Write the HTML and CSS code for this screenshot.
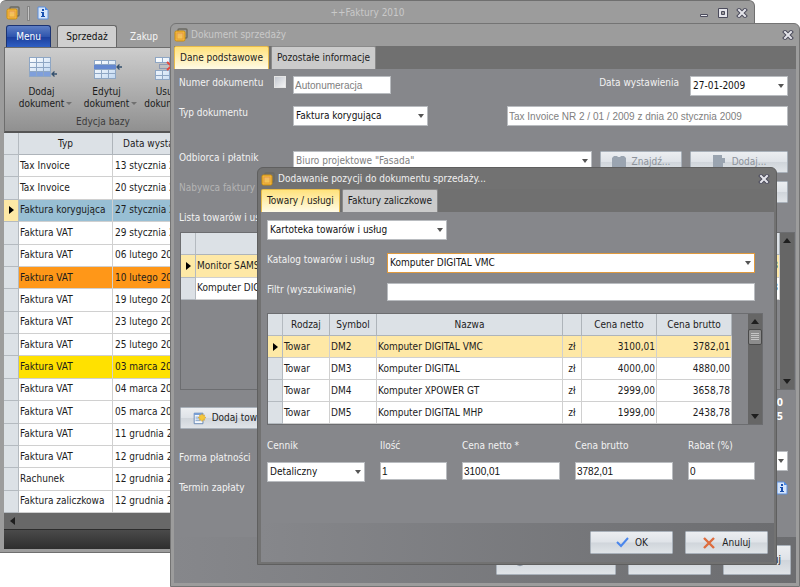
FILE: index.html
```
<!DOCTYPE html>
<html lang="pl">
<head>
  <meta charset="UTF-8">
  <meta name="viewport" content="width=device-width, initial-scale=1.0">
  <title>++Faktury 2010</title>
  <link rel="stylesheet" href="styles.css">
</head>
<body>
  <svg class="defs" aria-hidden="true">
    <linearGradient id="gold" x1="0" y1="0" x2="0" y2="1">
      <stop offset="0" stop-color="#f0b56c"/><stop offset="1" stop-color="#f6cb4c"/>
    </linearGradient>
    <linearGradient id="cell" x1="0" y1="0" x2="1" y2="1">
      <stop offset="0" stop-color="#ffffff"/><stop offset="1" stop-color="#c3d9f2"/>
    </linearGradient>
    <symbol id="app" viewBox="0 0 14 14">
      <rect x="4" y="1" width="9" height="9" rx="1" fill="none" stroke="#6b6a62" stroke-width="1.4"/>
      <rect x="1" y="3" width="10" height="10" rx="1.5" fill="#f3bd3c" stroke="#c98a10" stroke-width="1"/>
      <rect x="3" y="5" width="6" height="6" fill="url(#gold)" stroke="#e59a3c" stroke-width="1"/>
    </symbol>
    <symbol id="info" viewBox="0 0 12 14">
      <path d="M1 1h7l3 3v9H1z" fill="#d5e5fb" stroke="#5c8fdc"/>
      <path d="M8 1v3h3z" fill="#4f8ae0"/>
      <path d="M5 3h2v2H5zM4 6h3v4h1v1H4v-1h1V7H4z" fill="#174fb0"/>
    </symbol>
    <symbol id="close" viewBox="0 0 12 10">
      <path d="M3 2l6 6M9 2L3 8" stroke="#4c4c5c" stroke-width="4" stroke-linecap="square"/>
      <path d="M3 2l6 6M9 2L3 8" stroke="#e4e4ea" stroke-width="2" stroke-linecap="square"/>
    </symbol>
    <symbol id="grid" viewBox="0 0 22 20">
      <path d="M0 0h22v20H0z" fill="#8ea6c4"/>
      <path d="M1 1h6v4H1zM8 1h6v4H8zM15 1h6v4h-6zM1 6h6v4H1zM8 6h6v4H8zM15 6h6v4h-6zM1 11h6v3H1zM8 11h6v3H8zM15 11h6v3h-6z" fill="url(#cell)"/>
      <path d="M1 15h6v4H1zM8 15h6v4H8zM15 15h6v4h-6z" fill="#7f9fdb"/>
    </symbol>
  </svg>

  <div class="desktop">
    <section class="window main-window">
      <header class="titlebar">
        <svg class="app-icon"><use href="#app"/></svg>
        <span class="divider"></span>
        <svg class="info-icon"><use href="#info"/></svg>
        <h1>++Faktury 2010</h1>
        <button class="win-btn" aria-label="Minimalizuj"><svg viewBox="0 0 12 10"><path d="M2.5 6.5h7v2h-7z" fill="#e4e4ea" stroke="#4c4c5c"/></svg></button>
        <button class="win-btn" aria-label="Maksymalizuj"><svg viewBox="0 0 12 10"><path d="M1.500.500h9v9h-9z" fill="#e4e4ea" stroke="#4c4c5c"/><path d="M4.500 3.500h3v3h-3z" fill="#9c9c9c" stroke="#4c4c5c"/></svg></button>
        <button class="win-btn" aria-label="Zamknij"><svg><use href="#close"/></svg></button>
      </header>
      <nav class="ribbon-tabs">
        <button class="menu-btn">Menu</button>
        <button class="ribbon-tab active">Sprzedaż</button>
        <button class="ribbon-tab">Zakup</button>
      </nav>
      <div class="ribbon">
        <div class="ribbon-group">
          <div class="ribbon-buttons">
            <button class="ribbon-btn">
              <svg viewBox="0 0 32 24"><use href="#grid" x="3" y="1" width="22" height="20"/><path d="M26 18h5M28.500 15.500L26 18l2.500 2.500" fill="none" stroke="#34506e" stroke-width="1.300"/></svg>
              <span>Dodaj<br>dokument<i class="caret"></i></span>
            </button>
            <button class="ribbon-btn">
              <svg viewBox="0 0 32 24"><path d="M3 4h22v19H3z" fill="#8ea6c4"/><path d="M4 5h6v3H4zM11 5h6v3h-6zM18 5h6v3h-6zM4 14h6v3H4zM11 14h6v3h-6zM18 14h6v3h-6zM4 18h6v4H4zM11 18h6v4h-6zM18 18h6v4h-6z" fill="url(#cell)"/><path d="M3 9h22v4H3z" fill="#6488d0"/><path d="M26 11h5M28.500 8.500L26 11l2.500 2.500" fill="none" stroke="#34506e" stroke-width="1.300"/></svg>
              <span>Edytuj<br>dokument<i class="caret"></i></span>
            </button>
            <button class="ribbon-btn narrow">
              <svg viewBox="0 0 32 24"><path d="M4 1h22v6H4zM4 14h22v10H4z" fill="#8ea6c4"/><path d="M5 2h6v4H5zM12 2h6v4h-6zM19 2h6v4h-6zM5 15h6v4H5zM12 15h6v4h-6zM19 15h6v4h-6zM5 20h6v3H5zM12 20h6v3h-6zM19 20h6v3h-6z" fill="url(#cell)"/><path d="M8.500 8.500h14v4h-14z" fill="none" stroke="#5a72a4" stroke-dasharray="1 1"/><path d="M16 6l9 8m0-8l-9 8" stroke="#e5483c" stroke-width="2"/></svg>
              <span>Usuń<br>dokument<i class="caret"></i></span>
            </button>
          </div>
          <p>Edycja bazy</p>
        </div>
      </div>
      <div class="grid-pane">
        <table class="grid">
          <thead>
            <tr><th class="mark"></th><th class="col-type">Typ</th><th class="col-date">Data wystawienia</th></tr>
          </thead>
          <tbody>
            <tr><td class="mark"></td><td>Tax Invoice</td><td>13 stycznia 2009</td></tr>
            <tr><td class="mark"></td><td>Tax Invoice</td><td>20 stycznia 2009</td></tr>
            <tr class="row-blue"><td class="mark current"></td><td>Faktura korygująca</td><td>27 stycznia 2009</td></tr>
            <tr><td class="mark"></td><td>Faktura VAT</td><td>29 stycznia 2009</td></tr>
            <tr><td class="mark"></td><td>Faktura VAT</td><td>06 lutego 2009</td></tr>
            <tr class="row-orange"><td class="mark"></td><td>Faktura VAT</td><td>10 lutego 2009</td></tr>
            <tr><td class="mark"></td><td>Faktura VAT</td><td>19 lutego 2009</td></tr>
            <tr><td class="mark"></td><td>Faktura VAT</td><td>23 lutego 2009</td></tr>
            <tr><td class="mark"></td><td>Faktura VAT</td><td>25 lutego 2009</td></tr>
            <tr class="row-yellow"><td class="mark"></td><td>Faktura VAT</td><td>03 marca 2009</td></tr>
            <tr><td class="mark"></td><td>Faktura VAT</td><td>04 marca 2009</td></tr>
            <tr><td class="mark"></td><td>Faktura VAT</td><td>05 marca 2009</td></tr>
            <tr><td class="mark"></td><td>Faktura VAT</td><td>11 grudnia 2009</td></tr>
            <tr><td class="mark"></td><td>Faktura VAT</td><td>12 grudnia 2009</td></tr>
            <tr><td class="mark"></td><td>Rachunek</td><td>12 grudnia 2009</td></tr>
            <tr><td class="mark"></td><td>Faktura zaliczkowa</td><td>12 grudnia 2009</td></tr>
          </tbody>
        </table>
      </div>
      <div class="hscroll"><i class="arrow-left"></i></div>
      <footer class="statusbar"></footer>
    </section>

    <section class="window doc-window">
      <header class="titlebar">
        <svg class="app-icon"><use href="#app"/></svg>
        <h2>Dokument sprzedaży</h2>
        <button class="win-btn" aria-label="Zamknij"><svg><use href="#close"/></svg></button>
      </header>
      <nav class="tabs">
        <button class="tab active">Dane podstawowe</button>
        <button class="tab">Pozostałe informacje</button>
      </nav>
      <div class="doc-body">
        <div class="row">
          <label class="lead" for="number">Numer dokumentu</label>
          <input type="checkbox" class="check" aria-label="Autonumeracja">
          <input type="text" id="number" class="field number dim" value="Autonumeracja">
          <label class="push" for="date">Data wystawienia</label>
          <select id="date" class="field date"><option>27-01-2009</option></select>
        </div>
        <div class="row tall">
          <label class="lead wide" for="type">Typ dokumentu</label>
          <select id="type" class="field type"><option>Faktura korygująca</option></select>
          <input type="text" class="field source dim" aria-label="Dokument źródłowy" value="Tax Invoice NR 2 / 01 / 2009 z dnia 20 stycznia 2009">
        </div>
        <div class="row">
          <label class="lead wide" for="buyer">Odbiorca i płatnik</label>
          <select id="buyer" class="field buyer dim"><option>Biuro projektowe "Fasada"</option></select>
          <button class="btn find" disabled><svg viewBox="0 0 14 14"><path d="M0 3l2-2h3l1 1h2l1-1h3l2 2v11H0z" fill="#9aa4b0"/></svg>Znajdź...</button>
          <button class="btn add" disabled><svg viewBox="0 0 14 14"><path d="M1 0h9v3h3v5h-2v6H1z" fill="#9aa4b0"/></svg>Dodaj...</button>
        </div>
        <div class="row">
          <label class="lead wide faded">Nabywca faktury</label>
          <button class="btn add push" disabled aria-label="Dodaj nabywcę"></button>
        </div>
        <h3>Lista towarów i usług</h3>
        <div class="items-pane">
          <table class="grid">
            <thead><tr><th class="mark"></th><th>Nazwa</th><th>Wartość</th></tr></thead>
            <tbody>
              <tr class="row-cream"><td class="mark current"></td><td>Monitor SAMSUNG</td><td class="num">1098</td></tr>
              <tr><td class="mark"></td><td>Komputer DIGITAL</td><td class="num">4878</td></tr>
            </tbody>
          </table>
          <div class="vscroll"><i class="arrow-up"></i><i class="arrow-down"></i></div>
        </div>
        <div class="items-bar">
          <button class="btn add-item"><svg viewBox="0 0 16 16"><path d="M2.500 2.500h10v12h-10z" fill="#f4f8fd" stroke="#5d7fae"/><path d="M2.500 2.500h10v2h-10z" fill="#6f9ad6"/><path d="M4 7h6M4 9h5M4 11h6" stroke="#7a9cc8"/><path d="M11.500 3l1 2 2-.5-.5 2 2 1-2 1 .5 2-2-.5-1 2-1-2-2 .5.500-2-2-1 2-1-.5-2 2 .5z" fill="#f6c83a" stroke="#dba11c" stroke-width=".6"/></svg>Dodaj towar</button>
          <div class="totals"><b>5976,00</b><b>7290,65</b></div>
        </div>
        <div class="row">
          <label class="lead wide" for="payment">Forma płatności</label>
          <select id="payment" class="field push date"><option>Przelew</option></select>
        </div>
        <div class="row">
          <span class="lead wide">Termin zapłaty</span>
          <svg class="info-icon push"><use href="#info"/></svg>
        </div>
      </div>
      <footer class="actions doc-actions">
        <button class="btn print"><svg viewBox="0 0 16 16"><circle cx="8" cy="8" r="6" fill="#dfe3e8" stroke="#8b95a1" stroke-width="2"/></svg>Zapisz i drukuj</button>
        <button class="btn">Zamknij</button>
        <button class="btn cancel">Anuluj</button>
      </footer>
    </section>

    <section class="window item-window">
      <header class="titlebar">
        <svg class="app-icon"><use href="#app"/></svg>
        <h2>Dodawanie pozycji do dokumentu sprzedaży...</h2>
        <button class="win-btn" aria-label="Zamknij"><svg><use href="#close"/></svg></button>
      </header>
      <nav class="tabs">
        <button class="tab active">Towary / usługi</button>
        <button class="tab">Faktury zaliczkowe</button>
      </nav>
      <div class="item-body">
        <select class="field source-list" aria-label="Kartoteka"><option>Kartoteka towarów i usług</option></select>
        <div class="row">
          <label class="lead" for="catalog">Katalog towarów i usług</label>
          <select id="catalog" class="field grow focused"><option>Komputer DIGITAL VMC</option></select>
        </div>
        <div class="row">
          <label class="lead" for="filter">Filtr (wyszukiwanie)</label>
          <input type="text" id="filter" class="field grow">
        </div>
        <div class="stock-pane">
          <table class="grid">
            <thead>
              <tr><th class="mark"></th><th class="col-kind">Rodzaj</th><th class="col-kind">Symbol</th><th>Nazwa</th><th class="col-cur"></th><th class="col-price">Cena netto</th><th class="col-price">Cena brutto</th></tr>
            </thead>
            <tbody>
              <tr class="row-cream"><td class="mark current"></td><td>Towar</td><td>DM2</td><td>Komputer DIGITAL VMC</td><td class="cur">zł</td><td class="num">3100,01</td><td class="num">3782,01</td></tr>
              <tr><td class="mark"></td><td>Towar</td><td>DM3</td><td>Komputer DIGITAL</td><td class="cur">zł</td><td class="num">4000,00</td><td class="num">4880,00</td></tr>
              <tr><td class="mark"></td><td>Towar</td><td>DM4</td><td>Komputer XPOWER GT</td><td class="cur">zł</td><td class="num">2999,00</td><td class="num">3658,78</td></tr>
              <tr><td class="mark"></td><td>Towar</td><td>DM5</td><td>Komputer DIGITAL MHP</td><td class="cur">zł</td><td class="num">1999,00</td><td class="num">2438,78</td></tr>
            </tbody>
          </table>
          <div class="vscroll"><i class="arrow-up"></i><i class="thumb"></i><i class="arrow-down"></i></div>
        </div>
        <div class="prices">
          <div class="price"><label for="list">Cennik</label><select id="list" class="field"><option>Detaliczny</option></select></div>
          <div class="price"><label for="qty">Ilość</label><input type="text" id="qty" class="field" value="1"></div>
          <div class="price"><label for="net">Cena netto *</label><input type="text" id="net" class="field" value="3100,01"></div>
          <div class="price"><label for="gross">Cena brutto</label><input type="text" id="gross" class="field" value="3782,01"></div>
          <div class="price"><label for="discount">Rabat (%)</label><input type="text" id="discount" class="field" value="0"></div>
        </div>
      </div>
      <footer class="actions item-actions">
        <button class="btn"><svg viewBox="0 0 14 14"><path d="M2 6l4 4 7-8" fill="none" stroke="#4a86ec" stroke-width="2"/></svg>OK</button>
        <button class="btn"><svg viewBox="0 0 14 14"><path d="M2 2l10 10M12 2L2 12" stroke="#dd6c3e" stroke-width="2.400"/></svg>Anuluj</button>
      </footer>
    </section>
  </div>
</body>
</html>
```
FILE: styles.css
```
* {
  box-sizing: border-box;
}
body {
  margin: 0;
  background: #fff;
  color: #1c1c1c;
  font-family: "DejaVu Sans Condensed", "DejaVu Sans", sans-serif;
  font-size: 10px;
  line-height: 14px;
}
h1, h2, h3, p {
  margin: 0;
  font-size: inherit;
  font-weight: normal;
}
button, input, select {
  margin: 0;
  font: inherit;
  color: inherit;
}
.defs {
  position: absolute;
  width: 0;
  height: 0;
}
.desktop {
  position: relative;
  height: 100vh;
  min-height: 587px;
  overflow: hidden;
}

/* windows */
.window {
  position: absolute;
  display: flex;
  flex-direction: column;
  overflow: hidden;
}
.main-window {
  inset: 0 45px 34px 0;
  padding: 0 4px 3px;
  background: #9c9c9c;
  border: 1px solid #6f6f6f;
  border-left-width: 0;
  border-radius: 6px 6px 0 0;
}
.doc-window {
  inset: 23px 0 0 170px;
  padding: 0 3px 3px;
  background: #9c9c9c;
  border: 1px solid #747474;
  border-radius: 6px 6px 0 0;
}
.item-window {
  inset: 167px 23px 22px 257px;
  padding: 0 2px 2px 3px;
  background: #727272;
  border: 1px solid #5f5f5f;
  border-radius: 6px 6px 0 0;
}
.titlebar {
  display: flex;
  align-items: center;
  flex: none;
  height: 22px;
  gap: 3px;
  padding-right: 2px;
  color: #c9c9c9;
}
.titlebar h1 {
  flex: 1;
  padding-right: 12px;
  text-align: center;
}
.titlebar h2 {
  flex: 1;
}
.main-window .titlebar {
  height: 24px;
  padding: 0 2px;
  gap: 7px;
}
.item-window .titlebar {
  height: 21px;
  padding-right: 4px;
  color: #f0f0f0;
}
.app-icon {
  width: 14px;
  height: 14px;
}
.info-icon {
  width: 12px;
  height: 14px;
}
.divider {
  width: 3px;
  height: 15px;
  background: #c4c4c4;
  border: 1px solid #848484;
}
.win-btn {
  display: flex;
  padding: 0;
  border: 0;
  background: none;
}
.win-btn svg {
  width: 12px;
  height: 10px;
}

/* ribbon */
.ribbon-tabs {
  display: flex;
  gap: 6px;
  padding-left: 2px;
  flex: none;
}
.menu-btn, .ribbon-tab {
  height: 22px;
  padding: 0 6px;
  border: 1px solid transparent;
  border-bottom: 0;
  border-radius: 3px 3px 0 0;
}
.menu-btn {
  width: 45px;
  color: #fff;
  background: linear-gradient(#5f7fc4, #2f56ae 50%, #1c3f9c 52%, #2f5fc4);
  border-color: #1b3372;
}
.ribbon-tab {
  color: #f4f4f4;
  background: none;
}
.ribbon-tab.active {
  width: 60px;
  color: #111;
  background: #cfcfcf;
  border-color: #666;
}
.ribbon {
  flex: none;
  height: 86px;
  background: linear-gradient(#cdcdcd, #a9a9a9 60%, #909090);
  border: 1px solid #6d6d6d;
  border-bottom: 2px solid #555;
}
.ribbon-group {
  width: 196px;
  padding-top: 8px;
}
.ribbon-buttons {
  display: flex;
  padding-left: 4px;
}
.ribbon-btn {
  display: flex;
  flex-direction: column;
  align-items: center;
  flex: none;
  width: 65px;
  padding: 0;
  gap: 6px;
  border: 0;
  background: none;
  line-height: 12px;
}
.ribbon-btn.narrow {
  width: 56px;
}
.ribbon-btn svg {
  width: 32px;
  height: 24px;
}
.caret {
  display: inline-block;
  margin: 0 -8px 2px 2px;
  border: 3px solid transparent;
  border-top-color: #707070;
  border-bottom: 0;
}
.ribbon-group p {
  padding-top: 5px;
  color: #3c3c3c;
  text-align: center;
}

/* data grids */
.grid {
  width: 100%;
  height: 100%;
  table-layout: fixed;
  border-collapse: separate;
  border-spacing: 0;
  background: #fff;
}
.grid th, .grid td {
  height: 22px;
  padding: 0 1px;
  overflow: hidden;
  white-space: nowrap;
  text-align: left;
  border-right: 1px solid #d0d0d0;
  border-bottom: 1px solid #d0d0d0;
}
.grid th {
  font-weight: normal;
  text-align: center;
  background: #dce1e6;
  border-color: #aeb4ba;
}
.grid .mark {
  width: 15px;
  background: #dce1e6;
  border-color: #b4bac0;
}
.grid .current {
  background: #fde9a6 url("data:image/svg+xml,%3Csvg xmlns='http://www.w3.org/2000/svg' width='5' height='8'%3E%3Cpath d='M0 0l5 4-5 4z'/%3E%3C/svg%3E") no-repeat center;
}
.grid .num {
  text-align: right;
}
.grid .cur {
  text-align: center;
}
.row-blue td { background-color: #98bfd4; }
.row-orange td { background-color: #ff9718; }
.row-yellow td { background-color: #ffe100; }
.row-cream td { background-color: #fee8a6; }
.grid .col-type { width: 94px; }
.grid .col-date {
  padding-left: 10px;
  text-align: left;
}
.grid .col-kind { width: 47px; }
.grid .col-cur { width: 19px; }
.grid .col-price { width: 75px; }
.grid-pane {
  flex: 1;
  min-height: 0;
}
.grid-pane .grid td + td + td {
  padding-left: 2px;
}
.hscroll {
  display: flex;
  align-items: center;
  flex: none;
  height: 16px;
  padding-left: 6px;
  background: #686868;
}
.statusbar {
  flex: none;
  height: 20px;
  background: linear-gradient(#4a4a4a, #2e2e2e);
  border-top: 1px solid #2c2c2c;
}
.arrow-left {
  border: 4px solid transparent;
  border-right: 5px solid #1e1e1e;
  border-left: 0;
}
.vscroll {
  display: flex;
  flex-direction: column;
  align-items: center;
  flex: none;
  width: 14px;
  padding: 5px 0;
  background: #666;
}
.arrow-up {
  border: 4px solid transparent;
  border-bottom: 5px solid #1e1e1e;
  border-top: 0;
}
.arrow-down {
  margin-top: auto;
  border: 4px solid transparent;
  border-top: 5px solid #1e1e1e;
  border-bottom: 0;
}
.thumb {
  width: 14px;
  height: 16px;
  margin-top: 5px;
  background: repeating-linear-gradient(#c4c4c4 0 1px, #8c8c8c 1px 2px) center / 8px 8px no-repeat #8c8c8c;
  border: 1px solid #4a4a4a;
  border-radius: 2px;
}

/* tabs and form controls */
.tabs {
  display: flex;
  flex: none;
  gap: 2px;
  background: #707070;
}
.tab {
  height: 23px;
  padding: 0 5px;
  background: #cbcbcb;
  border: 1px solid #8a8a8a;
  border-bottom: 0;
  border-radius: 2px 2px 0 0;
}
.tab.active {
  background: linear-gradient(#ffe27c, #fffbe6);
  border-color: #e8bb4a;
}
.row {
  display: flex;
  align-items: flex-start;
  height: 20px;
  color: #f2f2f2;
}
.push {
  margin-left: auto;
}
.grow {
  flex: 1;
}
.faded {
  color: #b4b4b4;
}
.field {
  height: 20px;
  min-width: 0;
  padding: 0 2px;
  background-color: #fff;
  border: 1px solid #b9bcc0;
  border-radius: 0;
  color: #111;
}
input.field {
  height: 18px;
  padding: 0 1px;
  font-family: "Liberation Sans", Arial, sans-serif;
}
select.field {
  appearance: none;
  background-image: url("data:image/svg+xml,%3Csvg xmlns='http://www.w3.org/2000/svg' width='6' height='4'%3E%3Cpath d='M0 0h6L3 4z' fill='%23555'/%3E%3C/svg%3E");
  background-repeat: no-repeat;
  background-position: right 3px center;
}
.field.dim {
  color: #808080;
}
.field.focused {
  border-color: #e09a3e;
}
.btn {
  display: flex;
  align-items: center;
  justify-content: center;
  gap: 6px;
  height: 22px;
  padding: 0;
  color: #222;
  background: linear-gradient(#eceef1, #dfe3e8 48%, #d0d5db 52%, #e0e4e8);
  border: 1px solid #a9b1ba;
  border-radius: 1px;
}
.btn svg {
  width: 14px;
  height: 14px;
}
.btn:disabled {
  color: #8c929a;
}

/* sales document */
.doc-body {
  flex: 1;
  display: flex;
  flex-direction: column;
  gap: 10px;
  min-height: 0;
  padding: 7px 8px 0 5px;
  background: #86878b;
}
.doc-body .lead {
  width: 95px;
}
.doc-body .wide {
  width: 114px;
}
.check {
  appearance: none;
  width: 12px;
  height: 12px;
  margin-right: 7px;
  background: linear-gradient(135deg, #c4c8d0, #f4f4f4);
  border: 1px solid #e4e4e4;
}
.doc-body .tall {
  height: 35px;
}
.number, .date, .add, .add-item {
  width: 98px;
}
label.push {
  margin-right: 11px;
}
.type {
  width: 135px;
}
.row .source {
  flex: none;
  width: 281px;
  height: 20px;
  margin-left: auto;
}
.buyer {
  flex: 1;
}
.find {
  width: 82px;
  margin: 0 8px;
}
.doc-body h3 {
  color: #f2f2f2;
}
.items-pane {
  display: flex;
  height: 158px;
  margin: -3px -7px 0 1px;
  border: 1px solid #6c6d70;
}
.items-pane .grid {
  flex: 1;
  height: 67px;
}
.items-bar {
  display: flex;
  justify-content: space-between;
  align-items: flex-end;
  height: 35px;
  margin: -6px 0 12px 1px;
}
.totals {
  align-self: flex-start;
  display: flex;
  flex-direction: column;
  padding-top: 2px;
  padding-right: 5px;
  color: #fff;
  text-align: right;
}
.actions {
  display: flex;
  flex: none;
  justify-content: flex-end;
  gap: 12px;
  background: linear-gradient(90deg, #86878b, #6c6d70);
}
.doc-actions {
  height: 46px;
  padding: 8px 5px 0;
}
.doc-actions .btn {
  width: 83px;
  height: 30px;
}
.doc-actions .print {
  width: 120px;
}
.doc-actions .cancel {
  width: 68px;
  justify-content: flex-end;
  padding-right: 9px;
}

/* item picker */
.item-body {
  flex: 1;
  display: flex;
  flex-direction: column;
  gap: 10px;
  min-height: 0;
  padding: 8px 11px 0 6px;
  background: #86878b;
}
.item-body .source-list {
  width: 180px;
}
.item-body .row {
  margin-right: 8px;
}
.item-body .source-list + .row {
  margin-top: 3px;
}
.item-body .lead {
  width: 120px;
}
.stock-pane {
  display: flex;
  height: 112px;
  border: 1px solid #6c6d70;
}
.stock-pane .grid {
  flex: 1;
  margin-right: 16px;
}
.prices {
  display: grid;
  grid-template-columns: 98fr 67fr 98fr 98fr 67fr;
  gap: 15px;
  margin: 4px 8px 0 0;
  color: #f2f2f2;
}
.price {
  display: flex;
  flex-direction: column;
  gap: 9px;
  min-width: 0;
}
.item-actions {
  height: 39px;
  padding: 8px 6px 0;
}
.item-actions .btn {
  width: 83px;
  height: 23px;
}
```
